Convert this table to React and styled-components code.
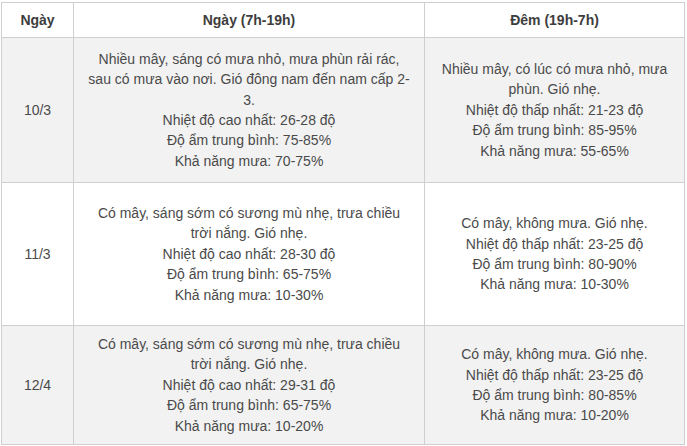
import React from "react"
import styled, { createGlobalStyle } from "styled-components"

const GlobalStyles = createGlobalStyle`
  html, body {
    margin: 0;
    padding: 0;
    background: #ffffff;
  }
  body {
    font-family: "Liberation Sans", Arial, sans-serif;
  }
`

//Styles
const Page = styled.div`
  padding: 2px 0 0 1px;
`

const Table = styled.table`
  border-collapse: collapse;
  table-layout: fixed;
  width: 683px;
  font-size: 14px;
  line-height: 20.4px;
  color: #4a4a4a;
`

const Row = styled.tr`
  height: ${(p) => p.$h}px;
  background: ${(p) => (p.$shade ? "#f2f2f2" : "#ffffff")};
`

const Head = styled.th`
  border: 1px solid #cfcfcf;
  padding: 0 8px;
  font-weight: bold;
  color: #3d3d3d;
  text-align: center;
  vertical-align: middle;
`

const Cell = styled.td`
  border: 1px solid #cfcfcf;
  padding: 8px 6px;
  text-align: center;
  vertical-align: middle;
  white-space: nowrap;
`

const rows = [
  {
    date: "10/3",
    h: 145,
    shade: true,
    day: [
      "Nhiều mây, sáng có mưa nhỏ, mưa phùn rải rác,",
      "sau có mưa vào nơi. Gió đông nam đến nam cấp 2-",
      "3.",
      "Nhiệt độ cao nhất: 26-28 độ",
      "Độ ẩm trung bình: 75-85%",
      "Khả năng mưa: 70-75%",
    ],
    night: [
      "Nhiều mây, có lúc có mưa nhỏ, mưa",
      "phùn. Gió nhẹ.",
      "Nhiệt độ thấp nhất: 21-23 độ",
      "Độ ẩm trung bình: 85-95%",
      "Khả năng mưa: 55-65%",
    ],
  },
  {
    date: "11/3",
    h: 143,
    shade: false,
    day: [
      "Có mây, sáng sớm có sương mù nhẹ, trưa chiều",
      "trời nắng. Gió nhẹ.",
      "Nhiệt độ cao nhất: 28-30 độ",
      "Độ ẩm trung bình: 65-75%",
      "Khả năng mưa: 10-30%",
    ],
    night: [
      "Có mây, không mưa. Gió nhẹ.",
      "Nhiệt độ thấp nhất: 23-25 độ",
      "Độ ẩm trung bình: 80-90%",
      "Khả năng mưa: 10-30%",
    ],
  },
  {
    date: "12/4",
    h: 117,
    shade: true,
    day: [
      "Có mây, sáng sớm có sương mù nhẹ, trưa chiều",
      "trời nắng. Gió nhẹ.",
      "Nhiệt độ cao nhất: 29-31 độ",
      "Độ ẩm trung bình: 65-75%",
      "Khả năng mưa: 10-20%",
    ],
    night: [
      "Có mây, không mưa. Gió nhẹ.",
      "Nhiệt độ thấp nhất: 23-25 độ",
      "Độ ẩm trung bình: 80-85%",
      "Khả năng mưa: 10-20%",
    ],
  },
]

const Lines = ({ items }) => (
  <>
    {items.map((line, i) => (
      <React.Fragment key={i}>
        {i > 0 && <br />}
        {line}
      </React.Fragment>
    ))}
  </>
)

const App = () => {
  return (
    <>
      <GlobalStyles />
      <Page>
        <Table>
          <colgroup>
            <col style={{ width: 72 }} />
            <col style={{ width: 351 }} />
            <col style={{ width: 260 }} />
          </colgroup>
          <thead>
            <Row $h={35}>
              <Head>Ngày</Head>
              <Head>Ngày (7h-19h)</Head>
              <Head>Đêm (19h-7h)</Head>
            </Row>
          </thead>
          <tbody>
            {rows.map((r) => (
              <Row key={r.date} $h={r.h} $shade={r.shade}>
                <Cell>{r.date}</Cell>
                <Cell>
                  <Lines items={r.day} />
                </Cell>
                <Cell>
                  <Lines items={r.night} />
                </Cell>
              </Row>
            ))}
          </tbody>
        </Table>
      </Page>
    </>
  )
}

export default App
